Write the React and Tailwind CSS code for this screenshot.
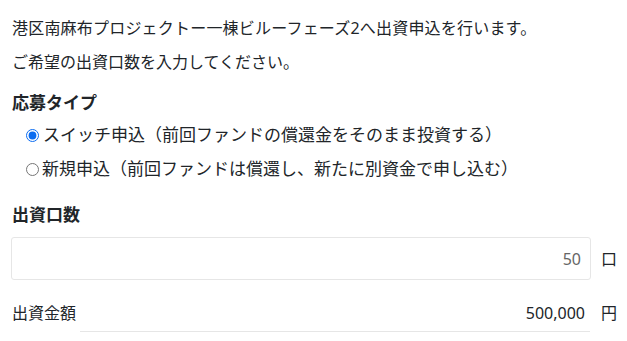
import { useState } from 'react';

const App = () => {
  const [type, setType] = useState('switch');
  const [units, setUnits] = useState('50');

  const amount = (Number(units) || 0) * 10000;

  return (
    <div className="w-[627px] h-[341px] overflow-hidden bg-white text-[#212529] text-[16px] font-['Noto_Sans','Noto_Sans_CJK_JP',sans-serif]">
      <div className="pl-3 pr-[10px] pt-[11px]">
        <p className="leading-[34px] whitespace-nowrap tracking-[0.2px]">港区南麻布プロジェクトー一棟ビルーフェーズ2へ出資申込を行います。</p>
        <p className="leading-[34px]">ご希望の出資口数を入力してください。</p>

        <h3 className="mt-3 text-[17px] font-bold leading-6">応募タイプ</h3>
        <div className="mt-[3px]">
          <label className="flex items-center h-[34px] pl-[14px] text-[17px]">
            <input
              type="radio"
              name="type"
              checked={type === 'switch'}
              onChange={() => setType('switch')}
              className="m-0 w-[13px] h-[13px] accent-[#0b6cf0]"
            />
            <span className="ml-[4px] whitespace-nowrap">スイッチ申込（前回ファンドの償還金をそのまま投資する）</span>
          </label>
          <label className="flex items-center h-[34px] pl-[14px] text-[17px]">
            <input
              type="radio"
              name="type"
              checked={type === 'new'}
              onChange={() => setType('new')}
              className="m-0 w-[13px] h-[13px] accent-[#0b6cf0]"
            />
            <span className="ml-[3px] whitespace-nowrap">新規申込（前回ファンドは償還し、新たに別資金で申し込む）</span>
          </label>
        </div>

        <h3 className="mt-[17px] text-[17px] font-bold leading-6">出資口数</h3>
        <div className="mt-[10px] flex items-center">
          <input
            value={units}
            onChange={(e) => setUnits(e.target.value)}
            className="w-[582px] h-[43px] -ml-px border border-[#e6e6e6] rounded-[3px] pl-[11px] pr-[9px] text-right text-[#666] outline-none"
          />
          <span className="ml-[10px]">口</span>
        </div>

        <div className="mt-[14px] flex items-center">
          <span className="w-[68px] shrink-0">出資金額</span>
          <div className="w-[512px] h-[38px] flex items-center justify-end border-b border-[#e6e6e6] pr-[5px]">
            {amount.toLocaleString()}
          </div>
          <span className="ml-[11px]">円</span>
        </div>
      </div>
    </div>
  );
};

export default App;
